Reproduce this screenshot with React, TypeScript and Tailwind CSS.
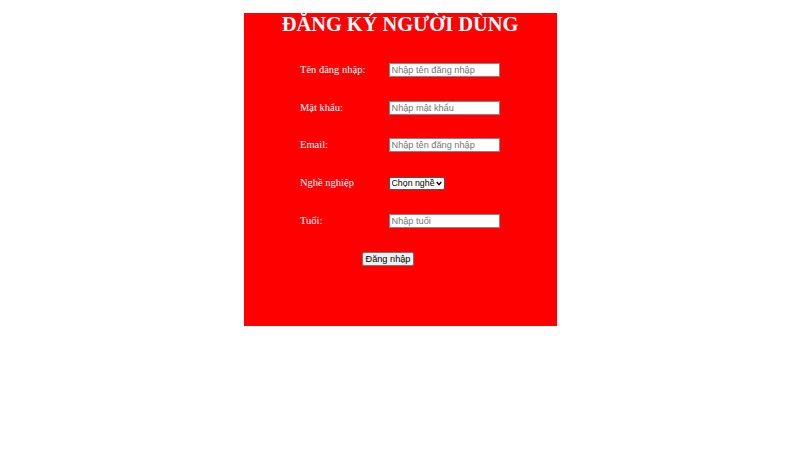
import React from 'react';

const serif = { fontFamily: '"Liberation Serif", "Times New Roman", serif' };
const sans = 'font-["Liberation_Sans",Arial,sans-serif]';

const inputCls = `w-[111px] h-[14px] bg-white border border-[#858585] px-[2px] text-[9.2px] text-black placeholder:text-[#757575] ${sans} outline-none`;

const Row = ({ label, children }: { label: string; children: React.ReactNode }) => (
  <div className="flex items-center h-[37.7px]">
    <label className="w-[89px] pl-[0.5px] text-[10.5px] text-white">{label}</label>
    {children}
  </div>
);

export default function App() {
  return (
    <div className="w-[800px] h-[450px] bg-white pt-[13px]" style={serif}>
      <div className="mx-auto w-[313px] h-[313px] bg-[#ff0000]">
        <h1 className="text-center text-[20.4px] leading-[23px] font-bold text-white">ĐĂNG KÝ NGƯỜI DÙNG</h1>
        <form className="mt-[15px] pl-[56px]">
          <Row label="Tên đăng nhập:">
            <input className={inputCls} placeholder="Nhập tên đăng nhập" />
          </Row>
          <Row label="Mật khẩu:">
            <input type="password" className={inputCls} placeholder="Nhập mật khẩu" />
          </Row>
          <Row label="Email:">
            <input className={inputCls} placeholder="Nhập tên đăng nhập" />
          </Row>
          <Row label="Nghề nghiệp">
            <div className="relative flex mt-[1px]">
              <select
                className={`block appearance-none w-[56px] h-[13px] pl-[2px] pr-[8px] bg-white border border-[#555] rounded-[2px] text-[8.8px] leading-none text-black ${sans}`}
              >
                <option>Chọn nghề</option>
                <option>Giáo viên</option>
                <option>Bác sĩ</option>
              </select>
              <svg
                className="pointer-events-none absolute right-[3px] top-[4px] w-[6px] h-[5px]"
                viewBox="0 0 6 5"
                fill="none"
                stroke="black"
                strokeWidth="1.4"
              >
                <path d="M0.7 1 L3 3.6 L5.3 1" />
              </svg>
            </div>
          </Row>
          <Row label="Tuổi:">
            <input className={inputCls} placeholder="Nhập tuổi" />
          </Row>
          <div className="flex items-center h-[37.7px] pl-[62px]">
            <button
              type="button"
              className={`h-[14px] mt-[2px] px-[3px] bg-[#efefef] border border-[#767676] rounded-[2px] text-[9.2px] text-black leading-none ${sans}`}
            >
              Đăng nhập
            </button>
          </div>
        </form>
      </div>
    </div>
  );
}
